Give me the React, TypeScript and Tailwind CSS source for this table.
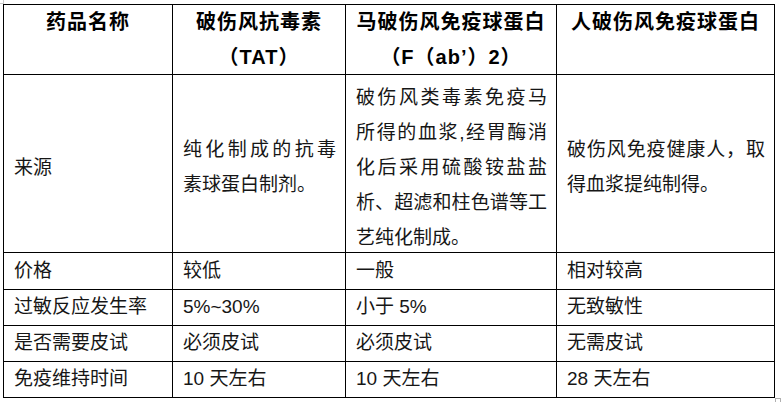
const font = "font-['Liberation_Sans','Noto_Sans_CJK_SC',sans-serif]";
const cellBase = "border-r border-b border-black";
const headCell = `${cellBase} flex flex-col items-center font-bold text-[20px] tracking-[1px] leading-[35px] text-black`;
const srcCell = `${cellBase} flex flex-col justify-center pt-[7px] pl-[10px] pr-[9px] leading-[35px]`;
const rowCell = `${cellBase} flex items-center pl-[10px]`;
const just = "text-justify [text-align-last:justify]";

const rows: string[][] = [
  ["价格", "较低", "一般", "相对较高"],
  ["过敏反应发生率", "5%~30%", "小于 5%", "无致敏性"],
  ["是否需要皮试", "必须皮试", "必须皮试", "无需皮试"],
  ["免疫维持时间", "10 天左右", "10 天左右", "28 天左右"],
];

export default function App() {
  return (
    <div className={`relative w-[781px] h-[402px] bg-white overflow-hidden ${font} text-[19px] text-[#161616]`}>
      {/* word table handles */}
      <span className="absolute left-0 top-0 w-[4px] h-[4px] border-r border-b border-[#c8c8c8]" />
      <span className="absolute left-[775px] top-[398px] w-[6px] h-[6px] border border-[#b0b0b0]" />

      <div className="ml-[3px] pt-[4px]">
        <div className="grid w-fit grid-cols-[169px_173px_211px_218px] grid-rows-[70px_178px_37px_36px_36px_36px] border-l border-t border-black">
          {/* header */}
          <div className={headCell}>药品名称</div>
          <div className={headCell}>
            <span>破伤风抗毒素</span>
            <span>（TAT）</span>
          </div>
          <div className={headCell}>
            <span>马破伤风免疫球蛋白</span>
            <span>（F（ab’）2）</span>
          </div>
          <div className={headCell}>人破伤风免疫球蛋白</div>

          {/* source row */}
          <div className={srcCell}>来源</div>
          <div className={srcCell}>
            <div className={just}>纯化制成的抗毒</div>
            <div>素球蛋白制剂。</div>
          </div>
          <div className={srcCell}>
            <div className={just}>破伤风类毒素免疫马</div>
            <div className={just}>所得的血浆,经胃酶消</div>
            <div className={just}>化后采用硫酸铵盐盐</div>
            <div className={just}>析、超滤和柱色谱等工</div>
            <div>艺纯化制成。</div>
          </div>
          <div className={srcCell}>
            <div className={just}>破伤风免疫健康人，取</div>
            <div>得血浆提纯制得。</div>
          </div>

          {rows.map((r) =>
            r.map((t, i) => (
              <div key={r[0] + i} className={rowCell}>
                {t}
              </div>
            ))
          )}
        </div>
      </div>
    </div>
  );
}
